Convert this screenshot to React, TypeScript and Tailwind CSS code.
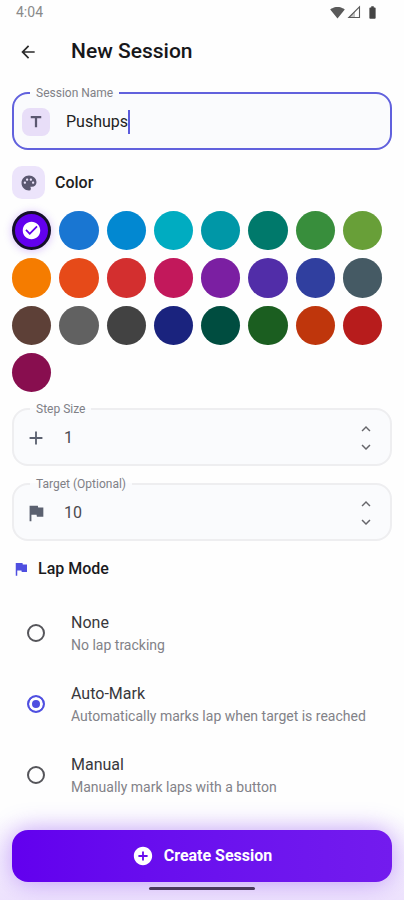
import { useState, type ReactNode } from 'react';
import {
    MdAdd,
    MdAddCircle,
    MdArrowBack,
    MdBatteryFull,
    MdCheckCircle,
    MdFlag,
    MdKeyboardArrowDown,
    MdKeyboardArrowUp,
    MdPalette,
    MdSignalWifi4Bar,
    MdTitle,
} from 'react-icons/md';

const COLORS = [
    '#6200ee', '#1976d2', '#0288d1', '#00acc1', '#0097a7', '#00796b', '#388e3c', '#689f38',
    '#f57c00', '#e64a19', '#d32f2f', '#c2185b', '#7b1fa2', '#512da8', '#303f9f', '#455a64',
    '#5d4037', '#616161', '#424242', '#1a237e', '#004d40', '#1b5e20', '#bf360c', '#b71c1c',
    '#880e4f',
];

const LAP_MODES = [
    { id: 'none', title: 'None', hint: 'No lap tracking' },
    { id: 'auto', title: 'Auto-Mark', hint: 'Automatically marks lap when target is reached' },
    { id: 'manual', title: 'Manual', hint: 'Manually mark laps with a button' },
];

function StatusBar() {
    return (
        <div className="flex h-6 items-center justify-between pl-4 pr-6 text-[#5a5a5a]">
            <span className="text-sm text-[#8a8a8a]">4:04</span>
            <div className="flex items-center gap-0.5">
                <MdSignalWifi4Bar className="size-[15px]" />
                <svg viewBox="0 0 14 14" className="size-[14px]" fill="none" stroke="currentColor">
                    <path d="M12.5 1.8v10.7H1.8z" strokeWidth="1.1" />
                    <path d="M1.5 13 8 6.5V13z" fill="currentColor" stroke="none" opacity="0.35" />
                </svg>
                <MdBatteryFull className="ml-0.5 size-[15px] text-[#444444]" />
            </div>
        </div>
    );
}

function Field({ id, label, active, children }: { id: string; label: string; active?: boolean; children: ReactNode }) {
    return (
        <fieldset
            className={
                active
                    ? 'min-w-0 rounded-2xl border-2 border-[#6161dd] bg-[#fafbfd] pl-2 pr-3'
                    : 'min-w-0 rounded-2xl border-2 border-[#eeeef0] bg-[#fafbfd] pl-2 pr-3'
            }
        >
            <legend className="ml-2 px-1.5 text-xs leading-[14px] text-[#808086]">
                <label htmlFor={id}>{label}</label>
            </legend>
            <div className="flex h-12 items-center pb-1">{children}</div>
        </fieldset>
    );
}

function NumberField({ id, label, icon, initial }: { id: string; label: string; icon: ReactNode; initial: number }) {
    const [value, setValue] = useState(initial);
    return (
        <Field id={id} label={label}>
            <span className="flex w-7 justify-center text-[#5b6170]">{icon}</span>
            <input
                id={id}
                inputMode="numeric"
                value={value}
                onChange={(e) => setValue(Number(e.target.value) || 0)}
                className="ml-3.5 min-w-0 flex-1 bg-transparent text-base text-[#4a4a4f] outline-none"
            />
            <div className="flex flex-col text-[#66666b]">
                <button type="button" aria-label={`Increase ${label}`} onClick={() => setValue(value + 1)} className="flex h-[18px] w-6 items-center justify-center">
                    <MdKeyboardArrowUp className="size-[18px]" />
                </button>
                <button type="button" aria-label={`Decrease ${label}`} onClick={() => setValue(value - 1)} className="flex h-[18px] w-6 items-center justify-center">
                    <MdKeyboardArrowDown className="size-[18px]" />
                </button>
            </div>
        </Field>
    );
}

function ColorPicker() {
    const [selected, setSelected] = useState(COLORS[0]);
    return (
        <div className="grid grid-cols-[repeat(auto-fill,minmax(39px,1fr))] gap-2 pr-2.5">
            {COLORS.map((color) => (
                <button
                    key={color}
                    type="button"
                    aria-label={color}
                    aria-pressed={color === selected}
                    onClick={() => setSelected(color)}
                    style={{ backgroundColor: color }}
                    className={
                        color === selected
                            ? 'flex aspect-square items-center justify-center rounded-full border-[3px] border-[#15102a] shadow-[0_1px_8px_rgba(98,0,238,0.25)]'
                            : 'aspect-square rounded-full'
                    }
                >
                    {color === selected && <MdCheckCircle className="size-[21px] text-white" />}
                </button>
            ))}
        </div>
    );
}

function LapModes() {
    const [mode, setMode] = useState('auto');
    return (
        <div className="mt-4 flex flex-col">
            {LAP_MODES.map(({ id, title, hint }) => (
                <label key={id} htmlFor={id} className="flex h-[71px] items-center pl-[15px]">
                    <input
                        id={id}
                        type="radio"
                        name="lap-mode"
                        checked={mode === id}
                        onChange={() => setMode(id)}
                        className="size-[18px] shrink-0 appearance-none rounded-full border-2 border-[#55555a] checked:border-[#4f4fe0] checked:bg-[#4f4fe0] checked:shadow-[inset_0_0_0_3px_white]"
                    />
                    <span className="ml-[26px] flex flex-col">
                        <span className="text-base leading-6 text-[#38383c]">{title}</span>
                        <span className="text-sm leading-5 text-[#828288]">{hint}</span>
                    </span>
                </label>
            ))}
        </div>
    );
}

export default function App() {
    const [name, setName] = useState('Pushups');

    return (
        <div className="flex min-h-screen flex-col overflow-hidden bg-[#fefefe] font-[Roboto,sans-serif]">
            <StatusBar />
            <header className="flex h-14 items-center pl-[18px]">
                <button type="button" aria-label="Back" className="text-[#2a2a2a]">
                    <MdArrowBack className="size-5" />
                </button>
                <h1 className="ml-[33px] text-[21px] font-medium text-[#17171a]">New Session</h1>
            </header>

            <main className="flex flex-col px-3 pt-1.5">
                <Field id="session-name" label="Session Name" active>
                    <span className="flex size-7 items-center justify-center rounded-lg bg-[#e8def8] text-[#5b5870]">
                        <MdTitle className="size-[18px]" />
                    </span>
                    <input
                        id="session-name"
                        value={name}
                        onChange={(e) => setName(e.target.value)}
                        className="ml-4 min-w-0 bg-transparent text-base text-[#1f1f23] caret-transparent outline-none [field-sizing:content]"
                    />
                    <span className="h-6 w-0.5 bg-[#5b5bdc]" />
                </Field>

                <div className="mb-3 mt-4 flex items-center gap-2.5">
                    <span className="flex size-[33px] items-center justify-center rounded-[10px] bg-[#ece4fb] text-[#5b5870]">
                        <MdPalette className="size-[18px]" />
                    </span>
                    <h2 className="text-base font-medium text-[#1f1f23]">Color</h2>
                </div>
                <ColorPicker />

                <div className="mt-2.5 flex flex-col gap-[11px]">
                    <NumberField id="step-size" label="Step Size" initial={1} icon={<MdAdd className="size-[22px]" />} />
                    <NumberField id="target" label="Target (Optional)" initial={10} icon={<MdFlag className="size-[22px]" />} />
                </div>

                <h2 className="mt-4 flex items-center gap-2 text-base font-medium text-[#1a1a1d]">
                    <MdFlag className="size-[18px] text-[#4f4fe0]" />
                    Lap Mode
                </h2>
                <LapModes />
            </main>

            <footer className="mt-auto flex flex-col items-center bg-linear-to-b from-[#fefefe] to-[#eee3fd] px-3 pb-2.5 pt-4">
                <button
                    type="button"
                    className="flex h-[52px] w-full items-center justify-center gap-2.5 rounded-2xl bg-linear-to-r from-[#6200ee] to-[#731bee] text-base font-bold text-white shadow-[0_0_26px_rgba(98,0,238,0.36)]"
                >
                    <MdAddCircle className="size-[22px]" />
                    Create Session
                </button>
                <span className="mt-[5px] h-[3px] w-[106px] rounded-full bg-[#4b3a5c]" />
            </footer>
        </div>
    );
}
